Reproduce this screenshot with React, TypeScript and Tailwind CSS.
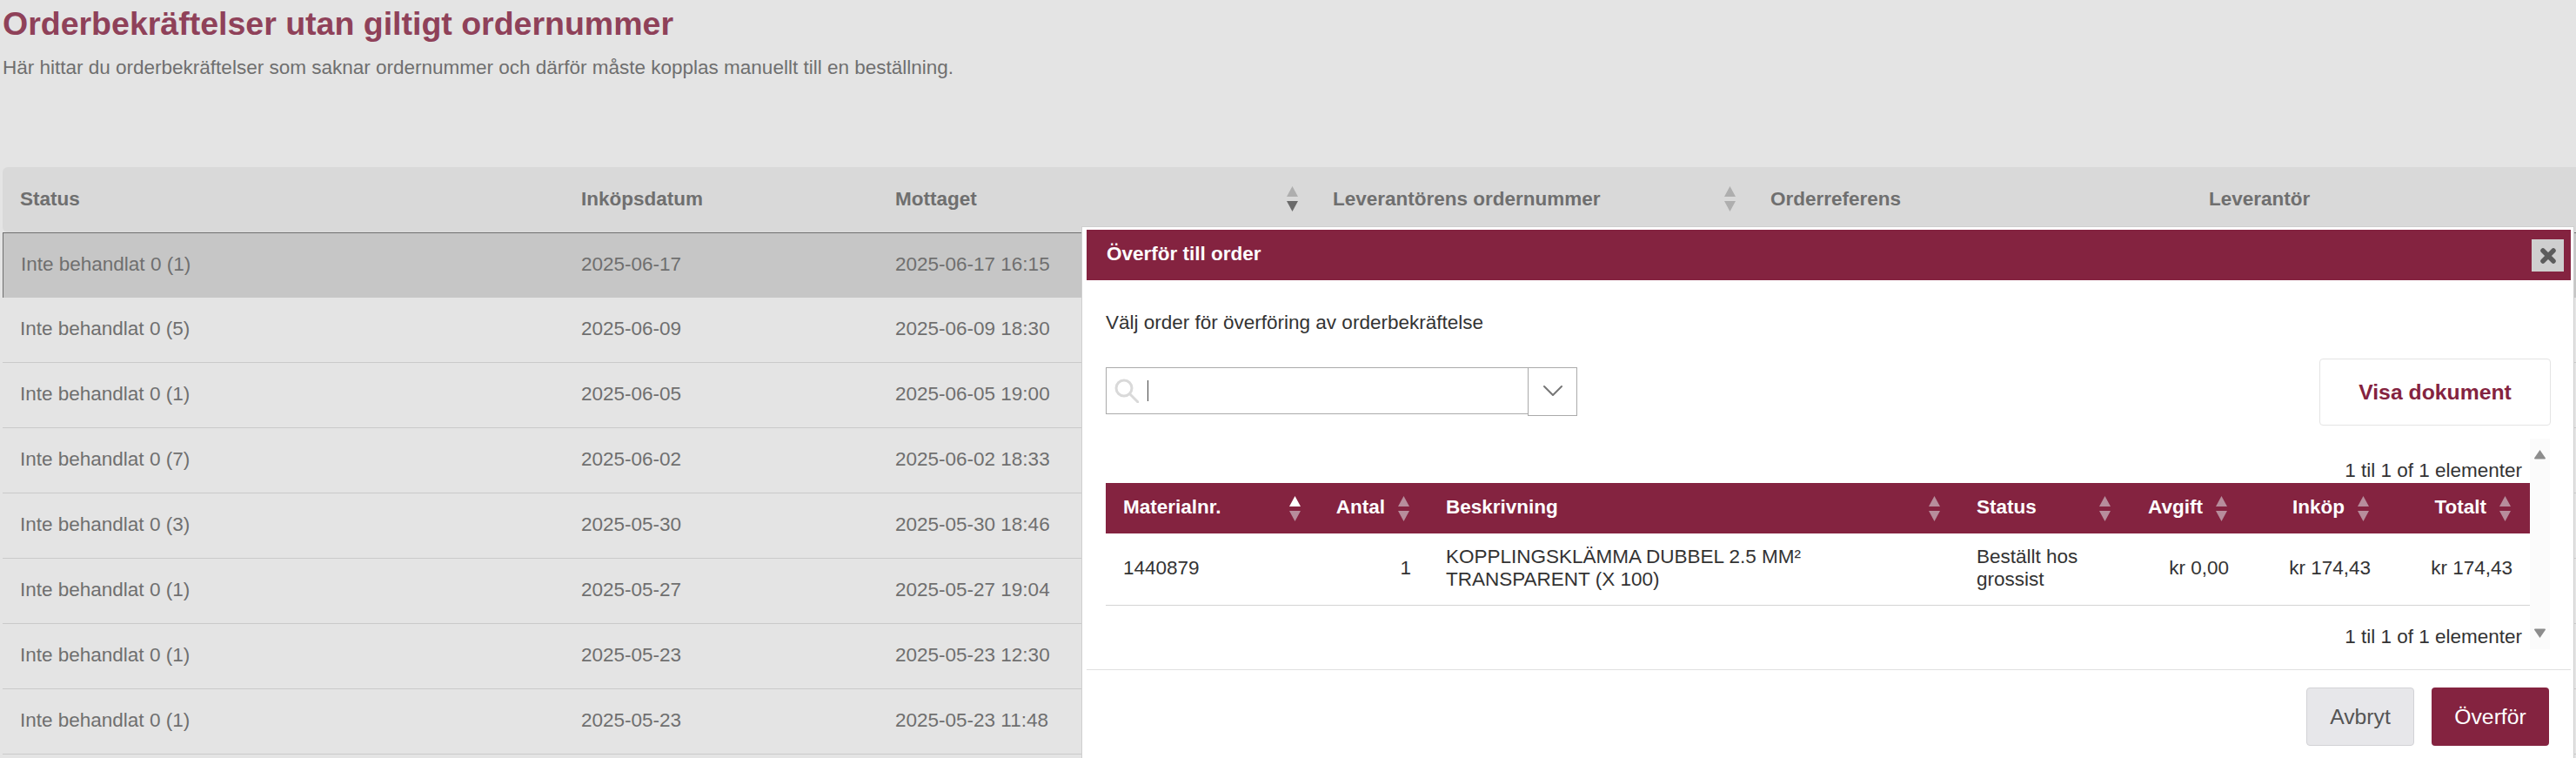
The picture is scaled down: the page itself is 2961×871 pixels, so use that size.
import { ChevronDown } from "lucide-react";

const rows = [
  { status: "Inte behandlat 0 (1)", date: "2025-06-17", received: "2025-06-17 16:15" },
  { status: "Inte behandlat 0 (5)", date: "2025-06-09", received: "2025-06-09 18:30" },
  { status: "Inte behandlat 0 (1)", date: "2025-06-05", received: "2025-06-05 19:00" },
  { status: "Inte behandlat 0 (7)", date: "2025-06-02", received: "2025-06-02 18:33" },
  { status: "Inte behandlat 0 (3)", date: "2025-05-30", received: "2025-05-30 18:46" },
  { status: "Inte behandlat 0 (1)", date: "2025-05-27", received: "2025-05-27 19:04" },
  { status: "Inte behandlat 0 (1)", date: "2025-05-23", received: "2025-05-23 12:30" },
  { status: "Inte behandlat 0 (1)", date: "2025-05-23", received: "2025-05-23 11:48" },
];

function SortIcon({ up, down }: { up: string; down: string }) {
  return (
    <svg width="13" height="29" viewBox="0 0 13 29" className="shrink-0">
      <path d="M6.5 0L13 12H0z" fill={up} />
      <path d="M0 17h13L6.5 29z" fill={down} />
    </svg>
  );
}

function DarkSort({ active }: { active?: boolean }) {
  return <SortIcon up={active ? "#ffffff" : "#b78d9c"} down="#b78d9c" />;
}

function ModalHead({ label, right, className }: { label: string; right?: boolean; className?: string }) {
  return (
    <th className={`p-0 font-bold ${className ?? ""}`}>
      <div className={`flex items-center ${right ? "justify-end gap-[15px] pr-[22px]" : "justify-between pl-[20px] pr-[22px]"}`}>
        <span className="pb-[2px]">{label}</span>
        <DarkSort active={label === "Materialnr."} />
      </div>
    </th>
  );
}

export default function App() {
  return (
    <div className="relative h-[871px] w-[2961px] overflow-hidden bg-[#e4e4e4] font-['Liberation_Sans',Arial,sans-serif] text-[22.5px] text-[#6f6f6f]">
      {/* Sidhuvud */}
      <div className="pl-[3px] pt-[6px]">
        <h1 className="text-[37.5px] font-bold leading-[42px] text-[#8f4159]">Orderbekräftelser utan giltigt ordernummer</h1>
        <p className="mt-[18px] leading-[24px]">
          Här hittar du orderbekräftelser som saknar ordernummer och därför måste kopplas manuellt till en beställning.
        </p>
      </div>

      {/* Tabell */}
      <table className="ml-[3px] mt-[102px] w-[2958px] table-fixed border-separate border-spacing-0">
        <colgroup>
          <col className="w-[645px]" />
          <col className="w-[361px]" />
          <col className="w-[503px]" />
          <col className="w-[503px]" />
          <col className="w-[504px]" />
          <col className="w-[442px]" />
        </colgroup>
        <thead>
          <tr className="h-[75px] bg-[#d9d9d9] text-left font-bold">
            <th className="rounded-l-[6px] pb-[2px] pl-[20px]">Status</th>
            <th className="pb-[2px] pl-[20px]">Inköpsdatum</th>
            <th className="pb-[2px] pl-[20px] pr-[20px]">
              <div className="flex items-center justify-between">
                <span>Mottaget</span>
                <SortIcon up="#aeaeae" down="#6b6b6b" />
              </div>
            </th>
            <th className="pb-[2px] pl-[20px] pr-[20px]">
              <div className="flex items-center justify-between">
                <span>Leverantörens ordernummer</span>
                <SortIcon up="#aeaeae" down="#aeaeae" />
              </div>
            </th>
            <th className="pb-[2px] pl-[20px]">Orderreferens</th>
            <th className="pb-[2px] pl-[20px]">Leverantör</th>
          </tr>
        </thead>
        <tbody>
          {rows.map((r, i) => (
            <tr key={i} className={`h-[75px] ${i === 0 ? "bg-[#c6c6c6]" : ""}`}>
              <td className={`pb-[2px] pl-[20px] ${i === 0 ? "border-l border-t border-[#6f6f6f]" : "border-b border-[#cacaca]"}`}>{r.status}</td>
              <td className={`pb-[2px] pl-[20px] ${i === 0 ? "border-t border-[#6f6f6f]" : "border-b border-[#cacaca]"}`}>{r.date}</td>
              <td className={`pb-[2px] pl-[20px] ${i === 0 ? "border-t border-[#6f6f6f]" : "border-b border-[#cacaca]"}`}>{r.received}</td>
              <td className={i === 0 ? "border-t border-[#6f6f6f]" : "border-b border-[#cacaca]"} />
              <td className={i === 0 ? "border-t border-[#6f6f6f]" : "border-b border-[#cacaca]"} />
              <td className={i === 0 ? "border-t border-[#6f6f6f]" : "border-b border-[#cacaca]"} />
            </tr>
          ))}
        </tbody>
      </table>

      {/* Dialog */}
      <div className="absolute left-[1243px] top-[260px] h-[640px] w-[1716px] border border-[#cfcfcf] bg-white pl-[5px] pr-[3px] pt-[3px] text-[#333333]">
        <div className="flex h-[58px] items-start justify-between bg-[#842340] pl-[23px] pr-[8px]">
          <span className="self-center pb-[2px] font-bold text-white">Överför till order</span>
          <button className="mt-[11px] flex h-[37px] w-[37px] items-center justify-center bg-[#cfcfcf]">
            <svg width="20" height="20" viewBox="0 0 20 20">
              <path d="M4 4l12 12M16 4L4 16" stroke="#5c5c5c" strokeWidth="5.5" strokeLinecap="round" />
            </svg>
          </button>
        </div>

        <div className="pl-[22px] pr-[23px]">
          <p className="mt-[37px] leading-[24px]">Välj order för överföring av orderbekräftelse</p>

          <div className="mt-[29px] flex items-start justify-between">
            <div className="mt-[10px] flex items-start">
              <div className="flex h-[54px] w-[486px] items-center border border-[#aaaaaa] pl-[9px]">
                <svg width="28" height="28" viewBox="0 0 28 28" fill="none" stroke="#d9d9d9" strokeWidth="3">
                  <circle cx="11" cy="11" r="9" />
                  <path d="M18 18l9 9" strokeLinecap="round" />
                </svg>
                <span className="ml-[10px] h-[24px] w-px bg-[#444444]" />
              </div>
              <div className="-ml-px flex h-[56px] w-[57px] items-center justify-center border border-[#aaaaaa] pb-[2px]">
                <ChevronDown size={40} strokeWidth={1.2} className="text-[#777777]" />
              </div>
            </div>
            <button className="h-[77px] w-[266px] rounded-[4px] border border-[#e4e4e4] text-[24.75px] font-bold text-[#842340]">Visa dokument</button>
          </div>

          {/* Rullbart område */}
          <div className="mt-[15px] flex h-[242px] items-stretch">
            <div className="w-[1637px]">
              <div className="flex h-[51px] items-end justify-end pb-[2px] pr-[9px] leading-[24px]">1 til 1 of 1 elementer</div>
              <table className="w-full table-fixed border-separate border-spacing-0">
                <colgroup>
                  <col className="w-[246px]" />
                  <col className="w-[125px]" />
                  <col className="w-[610px]" />
                  <col className="w-[196px]" />
                  <col className="w-[134px]" />
                  <col className="w-[163px]" />
                  <col className="w-[163px]" />
                </colgroup>
                <thead>
                  <tr className="h-[58px] bg-[#842340] text-left text-white">
                    <ModalHead label="Materialnr." />
                    <ModalHead label="Antal" right />
                    <ModalHead label="Beskrivning" />
                    <ModalHead label="Status" />
                    <ModalHead label="Avgift" right />
                    <ModalHead label="Inköp" right />
                    <ModalHead label="Totalt" right />
                  </tr>
                </thead>
                <tbody>
                  <tr className="h-[83px] leading-[26px]">
                    <td className="border-b border-[#d4d4d4] pb-[2px] pl-[20px]">1440879</td>
                    <td className="border-b border-[#d4d4d4] pb-[2px] pr-[20px] text-right">1</td>
                    <td className="border-b border-[#d4d4d4] pb-[2px] pl-[20px] pr-[20px]">KOPPLINGSKLÄMMA DUBBEL 2.5 MM² TRANSPARENT (X 100)</td>
                    <td className="border-b border-[#d4d4d4] pb-[2px] pl-[20px] pr-[20px]">Beställt hos grossist</td>
                    <td className="border-b border-[#d4d4d4] pb-[2px] pr-[20px] text-right">kr 0,00</td>
                    <td className="border-b border-[#d4d4d4] pb-[2px] pr-[20px] text-right">kr 174,43</td>
                    <td className="border-b border-[#d4d4d4] pb-[2px] pr-[20px] text-right">kr 174,43</td>
                  </tr>
                </tbody>
              </table>
              <div className="mt-[24px] pr-[9px] text-right leading-[24px]">1 til 1 of 1 elementer</div>
            </div>
            <div className="flex w-[23px] flex-col items-center justify-between bg-[#fbfbfb] py-[12px]">
              <svg width="15" height="12" viewBox="0 0 15 12">
                <path d="M7.5 1L14 10.5a1 1 0 0 1-1 1H2a1 1 0 0 1-1-1z" fill="#8c8c8c" />
              </svg>
              <svg width="15" height="12" viewBox="0 0 15 12">
                <path d="M2 .5h11a1 1 0 0 1 1 1L7.5 11 1 1.5a1 1 0 0 1 1-1z" fill="#8c8c8c" />
              </svg>
            </div>
          </div>
        </div>

        {/* Knappar */}
        <div className="mt-[23px] flex justify-end gap-[20px] border-t border-[#e0e0e0] pr-[25px] pt-[20px]">
          <button className="h-[67px] w-[124px] rounded-[4px] border border-[#d2d2d6] bg-[#e7e7ea] text-[24.75px] text-[#555555]">Avbryt</button>
          <button className="h-[67px] w-[135px] rounded-[4px] bg-[#842340] text-[24.75px] text-white">Överför</button>
        </div>
      </div>
    </div>
  );
}
